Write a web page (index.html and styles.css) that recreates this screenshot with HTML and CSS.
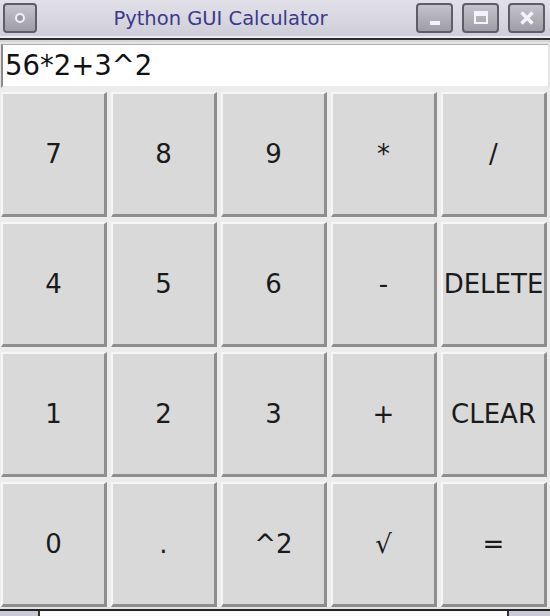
FILE: index.html
```html
<!DOCTYPE html>
<html>
<head>
<meta charset="utf-8">
<link rel="stylesheet" href="styles.css">
</head>
<body>
<div class="window">
  <div class="titlebar">
    <div class="tbtn menu"><span class="dot"></span></div>
    <div class="title">Python GUI Calculator</div>
    <div class="tbtns">
      <div class="tbtn"><svg width="18" height="18" viewBox="0 0 18 18"><rect x="4" y="12" width="10" height="4" fill="#f4f4f8"/></svg></div>
      <div class="tbtn"><svg width="18" height="18" viewBox="0 0 18 18"><rect x="3" y="3" width="12" height="11" fill="none" stroke="#f4f4f8" stroke-width="2"/><rect x="3" y="3" width="12" height="4" fill="#f4f4f8"/></svg></div>
      <div class="tbtn"><svg width="18" height="18" viewBox="0 0 18 18"><path d="M3.5 3.5 L14.5 14.5 M14.5 3.5 L3.5 14.5" stroke="#f4f4f8" stroke-width="3.4"/></svg></div>
    </div>
  </div>
  <div class="sep"></div>
  <div class="entry">56*2+3^2</div>
  <div class="keys">
    <div class="key">7</div>
    <div class="key">8</div>
    <div class="key">9</div>
    <div class="key">*</div>
    <div class="key">/</div>
    <div class="key">4</div>
    <div class="key">5</div>
    <div class="key">6</div>
    <div class="key">-</div>
    <div class="key">DELETE</div>
    <div class="key">1</div>
    <div class="key">2</div>
    <div class="key">3</div>
    <div class="key">+</div>
    <div class="key">CLEAR</div>
    <div class="key">0</div>
    <div class="key">.</div>
    <div class="key">^2</div>
    <div class="key">√</div>
    <div class="key">=</div>
  </div>
  <div class="bottom">
    <div class="bl"></div>
    <div class="bm"></div>
    <div class="br"></div>
  </div>
</div>
</body>
</html>
```

FILE: styles.css
```css
html, body {
  margin: 0;
  padding: 0;
}
body {
  width: 550px;
  height: 616px;
  overflow: hidden;
  background: #e4e4e4;
  font-family: "DejaVu Sans", sans-serif;
}
.window {
  display: flex;
  flex-direction: column;
  width: 550px;
  height: 616px;
}
.titlebar {
  height: 38px;
  display: flex;
  align-items: center;
  padding: 0 5px 0 3px;
  box-sizing: border-box;
  background: linear-gradient(#e2e1e9, #cfced8);
  border-bottom: 2px solid #ececf0;
}
.tbtn {
  width: 34px;
  height: 30px;
  box-sizing: border-box;
  border: 2px solid #5f5e67;
  border-radius: 4px;
  background: linear-gradient(#c4c3cc, #9f9ea8);
  display: flex;
  align-items: center;
  justify-content: center;
}
.dot {
  width: 6px;
  height: 6px;
  border: 2px solid #f2f2f6;
  border-radius: 50%;
  background: #9a99a3;
}
.title {
  flex: 1;
  text-align: center;
  font-size: 19.5px;
  color: #3b3a8a;
  padding-right: 12px;
}
.tbtns {
  display: flex;
  gap: 9px;
}
.tbtns .tbtn {
  width: 37px;
}
.sep {
  height: 4px;
  box-sizing: border-box;
  border-top: 2px solid #2f2f2f;
  background: #d6d6d6;
}
.entry {
  height: 44px;
  margin: 2px 2px 0 1px;
  box-sizing: border-box;
  background: #fff;
  border-left: 2px solid #8c8c8c;
  border-top: 1px solid #b0b0b0;
  border-bottom: 2px solid #ececec;
  font-size: 27.5px;
  line-height: 40px;
  padding-left: 2px;
  color: #111;
}
.keys {
  display: grid;
  grid-template-columns: repeat(5, 106px);
  grid-template-rows: repeat(4, 125px);
  column-gap: 4px;
  row-gap: 5px;
  padding: 4px 3px 0 1px;
  background: #ececec;
}
.key {
  box-sizing: border-box;
  background: #d9d9d9;
  border-top: 2px solid #f6f6f6;
  border-left: 2px solid #f6f6f6;
  border-right: 3px solid #8e8e8e;
  border-bottom: 3px solid #8e8e8e;
  display: flex;
  align-items: center;
  justify-content: center;
  font-size: 26px;
  color: #1a1a1a;
}
.bottom {
  flex: 1;
  display: flex;
  margin-top: 2px;
  border-top: 2px solid #222;
}
.bl {
  width: 38px;
  background: #cac9d8;
  border-right: 2px solid #333;
}
.bm {
  flex: 1;
  background: #fafafa;
}
.br {
  width: 41px;
  background: #cac9d8;
  border-left: 2px solid #333;
}
```
